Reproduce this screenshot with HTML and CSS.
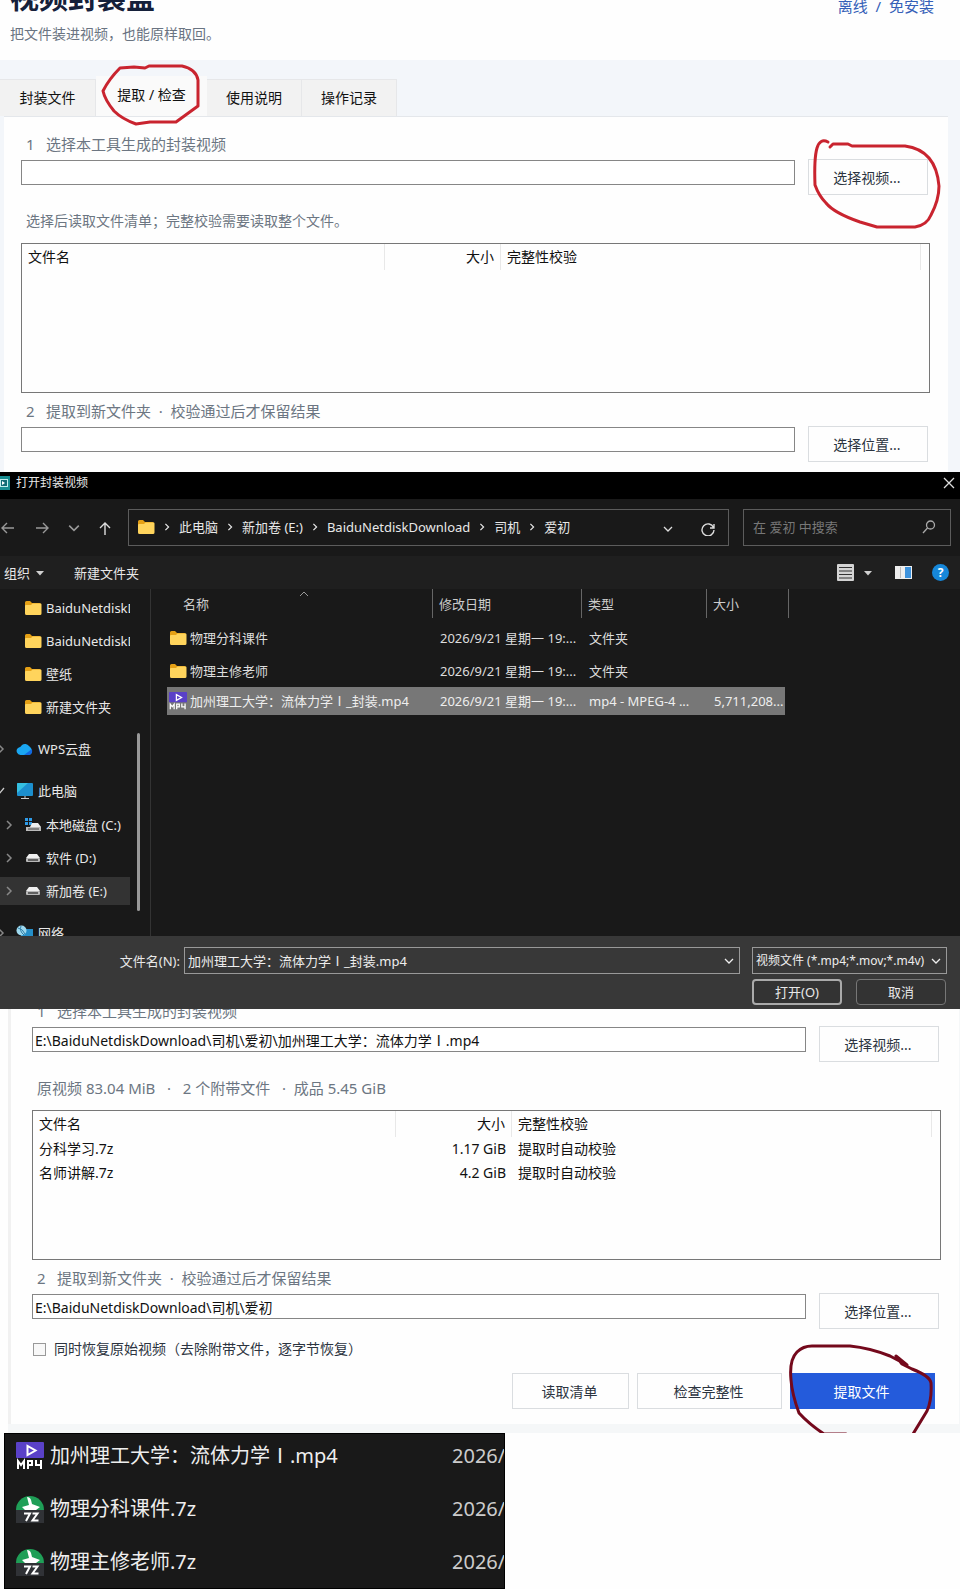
FILE: index.html
```html
<!DOCTYPE html>
<html lang="zh-CN">
<head>
<meta charset="utf-8">
<title>视频封装盒</title>
<link rel="stylesheet" href="styles.css">
</head>
<body>
<svg class="defs" width="0" height="0" aria-hidden="true">
  <symbol id="folder" viewBox="0 0 18 16"><path d="M1 2.500Q1 1 2.500 1H6l2 2h7.500Q17 3 17 4.500V8H1z" fill="#e5a015"/><path d="M1 6Q1 5 2 5H7l1.500-1.500H16.500Q17.500 3.500 17.500 4.500V13.500Q17.500 15 16 15H2.500Q1 15 1 13.500z" fill="#ffd45c"/></symbol>
  <symbol id="chev" viewBox="0 0 10 10"><path d="M3 1l4 4-4 4" fill="none" stroke="currentColor" stroke-width="1.500"/></symbol>
  <symbol id="down" viewBox="0 0 10 10"><path d="M1 3l4 4 4-4" fill="none" stroke="currentColor" stroke-width="1.300"/></symbol>
  <symbol id="tri" viewBox="0 0 10 10"><path d="M1 3h8L5 7.500z" fill="#d0d0d0"/></symbol>
  <symbol id="drive" viewBox="0 0 16 12"><path d="M4 2h8L15 6H1z" fill="#f0f0f0"/><rect x="1" y="6" width="14" height="4" rx="1" fill="#b9b9b9"/><path d="M3 8h10" stroke="#444" stroke-width="1.500"/></symbol>
  <symbol id="mp4" viewBox="0 0 28 28"><rect width="28" height="16" rx="1" fill="#5a41c8"/><path d="M11.500 4v9l8-4.500z" fill="none" stroke="#fff" stroke-width="2"/><path d="M2 27v-8l3 4 3-4v8M12 27v-8h4v4h-4M20 18v5h6M25 18v9" fill="none" stroke="#fff" stroke-width="2"/></symbol>
  <symbol id="sevenz" viewBox="0 0 28 28"><path d="M0 15a14 14 0 0 1 28 0z" fill="#1f9f57"/><path d="M11 2q3 0 4 3l1 4 8 3-4 3H9l-3-3 7-2z" fill="#fff"/><rect y="15" width="28" height="13" fill="#303236"/><path d="M8 18.500h6l-4 7.500M16.500 18.500h5l-5 7h6" fill="none" stroke="#fff" stroke-width="2"/></symbol>
</svg>

<main class="page">
  <section class="tool">
    <header class="tool-head">
      <div>
        <h1 class="tool-title">视频封装盒</h1>
        <p class="tool-sub">把文件装进视频，也能原样取回。</p>
      </div>
      <span class="tool-note">离线 &nbsp;/ &nbsp;免安装</span>
    </header>
    <nav class="tabs" role="tablist">
      <button class="tab tab-first" role="tab">封装文件</button>
      <div class="marked">
        <button class="tab tab-active" role="tab" aria-selected="true">提取 / 检查</button>
        <svg class="mark mark-tab" width="104" height="66" viewBox="0 0 104 66"><path d="M3 29Q9 17 20 6L34 5 45 6 49 4H82Q96 7 98 18V44L76 60H50L36 62Q22 57 14 49 5 38 3 29z"/></svg>
      </div>
      <button class="tab" role="tab">使用说明</button>
      <button class="tab tab-last" role="tab">操作记录</button>
    </nav>
    <div class="panel">
      <label class="step" for="v1"><span class="num">1</span>选择本工具生成的封装视频</label>
      <div class="pick">
        <input class="path" id="v1" type="text">
        <div class="marked">
          <button class="btn">选择视频...</button>
          <svg class="mark mark-pick" width="136" height="96" viewBox="0 0 136 96"><path d="M20 6Q12 2 9 12 6 22 7 49 11 60 18 67 26 77 52 86L69 91H107Q119 89 123 79 131 64 131 50 128 14 97 10H44L40 8H25L22 11"/></svg>
        </div>
      </div>
      <p class="status status-hint">选择后读取文件清单；完整校验需要读取整个文件。</p>
      <div class="list">
        <table class="grid">
          <colgroup><col class="c-name"><col class="c-size"><col><col class="c-end"></colgroup>
          <thead><tr><th>文件名</th><th class="num-cell">大小</th><th>完整性校验</th><th></th></tr></thead>
        </table>
      </div>
      <label class="step" for="o1"><span class="num">2</span>提取到新文件夹 &nbsp;·&nbsp; 校验通过后才保留结果</label>
      <div class="pick">
        <input class="path" id="o1" type="text">
        <button class="btn">选择位置...</button>
      </div>
    </div>
  </section>

  <section class="dialog">
    <header class="bar">
      <svg width="10" height="14" viewBox="0 0 10 14"><path d="M0 0h10v14H0z" fill="#178c90"/><path d="M0 3h8v8H0z" fill="#bfeeee"/><path d="M1 4h6v6H1z" fill="#126b75"/><path d="M2 5l3 2-3 2z" fill="#fff"/></svg>
      <span class="bar-title">打开封装视频</span>
      <button class="icon-btn" aria-label="关闭"><svg width="12" height="12" viewBox="0 0 12 12"><path d="M1 1l10 10M11 1L1 11" stroke="#ddd" stroke-width="1.300"/></svg></button>
    </header>
    <div class="nav">
      <div class="arrows">
        <button class="icon-btn dim" aria-label="后退"><svg width="14" height="14" viewBox="0 0 14 14"><path d="M14 7H2M7 2L2 7l5 5" fill="none" stroke="currentColor" stroke-width="1.400"/></svg></button>
        <button class="icon-btn dim forward" aria-label="前进"><svg width="14" height="14" viewBox="0 0 14 14"><path d="M0 7h12M7 2l5 5-5 5" fill="none" stroke="currentColor" stroke-width="1.400"/></svg></button>
        <button class="icon-btn dim" aria-label="最近位置"><svg width="12" height="12"><use href="#down"/></svg></button>
        <button class="icon-btn" aria-label="上移"><svg width="14" height="14" viewBox="0 0 14 14"><path d="M7 14V2M2 7l5-5 5 5" fill="none" stroke="currentColor" stroke-width="1.400"/></svg></button>
      </div>
      <div class="address">
        <svg width="18" height="16"><use href="#folder"/></svg>
        <svg class="sep" width="8" height="8"><use href="#chev"/></svg><span>此电脑</span>
        <svg class="sep" width="8" height="8"><use href="#chev"/></svg><span>新加卷 (E:)</span>
        <svg class="sep" width="8" height="8"><use href="#chev"/></svg><span>BaiduNetdiskDownload</span>
        <svg class="sep" width="8" height="8"><use href="#chev"/></svg><span>司机</span>
        <svg class="sep" width="8" height="8"><use href="#chev"/></svg><span>爱初</span>
        <span class="address-end">
          <button class="icon-btn" aria-label="历史"><svg width="10" height="10"><use href="#down"/></svg></button>
          <button class="icon-btn" aria-label="刷新"><svg width="14" height="14" viewBox="0 0 14 14"><path d="M12.500 5.500A6 6 0 1 0 13 8M13 2v4H9" fill="none" stroke="currentColor" stroke-width="1.400"/></svg></button>
        </span>
      </div>
      <div class="search">
        <input class="search-input" type="text" aria-label="搜索" placeholder="在 爱初 中搜索">
        <svg width="14" height="14" viewBox="0 0 14 14"><circle cx="8.500" cy="5" r="4" fill="none" stroke="#aaa" stroke-width="1.300"/><path d="M5.500 8L1 13" stroke="#aaa" stroke-width="1.300"/></svg>
      </div>
    </div>
    <div class="toolbar">
      <button class="text-btn">组织 <svg width="10" height="10"><use href="#tri"/></svg></button>
      <button class="text-btn">新建文件夹</button>
      <div class="views">
        <button class="icon-btn" aria-label="视图"><svg width="17" height="17" viewBox="0 0 17 17"><rect width="17" height="17" rx="1" fill="#d4d4d4"/><path d="M2 3.500h13M2 7h13M2 10.500h13M2 14h13" stroke="#333" stroke-width="1.200"/></svg></button>
        <button class="icon-btn view-more" aria-label="更多视图"><svg width="10" height="10"><use href="#tri"/></svg></button>
        <button class="icon-btn view-pane" aria-label="预览窗格"><svg width="17" height="13" viewBox="0 0 17 13"><path d="M0 0h17v13H0z" fill="#eee"/><path d="M10 1h6v11h-6z" fill="#3d92dc"/><path d="M5.500 1v11" stroke="#bbb"/></svg></button>
        <button class="help" aria-label="帮助">?</button>
      </div>
    </div>
    <div class="browse">
      <ul class="tree">
        <li class="node sub"><svg width="18" height="16"><use href="#folder"/></svg><span class="cut">BaiduNetdiskDownload</span></li>
        <li class="node sub"><svg width="18" height="16"><use href="#folder"/></svg><span class="cut">BaiduNetdiskDownload</span></li>
        <li class="node sub"><svg width="18" height="16"><use href="#folder"/></svg><span>壁纸</span></li>
        <li class="node sub"><svg width="18" height="16"><use href="#folder"/></svg><span>新建文件夹</span></li>
        <li class="node top"><svg class="twist" width="10" height="10"><use href="#chev"/></svg><svg width="18" height="14" viewBox="0 0 18 14"><path d="M5 13a4 4 0 0 1-3-7Q5 5 6 3a5 5 0 0 1 7 1q3 2 3 6-1 3-4 3z" fill="#1aa7f2"/><path d="M8 13L16 7q1 6-4 6z" fill="#1267e0"/></svg><span>WPS云盘</span></li>
        <li class="node top"><svg class="twist" width="10" height="10" viewBox="0 0 10 10"><path d="M0 5l3 3 5-6" fill="none" stroke="#ccc" stroke-width="1.300"/></svg><svg width="18" height="16" viewBox="0 0 18 16"><rect x="1" width="16" height="13" rx="1" fill="#1c8fce"/><path d="M1 10L12 0H2Q1 0 1 1z" fill="#35bfe0"/><path d="M9 13v2M5 15.500h8" stroke="#ccc"/></svg><span>此电脑</span></li>
        <li class="node leaf"><svg class="twist" width="10" height="10"><use href="#chev"/></svg><svg width="18" height="14" viewBox="0 0 18 14"><path d="M1 0h3v3H1zM5 0h3v3H5zM1 4h3v3H1zM5 4h3v3H5z" fill="#2e9be8"/><path d="M8 5h6l3 4H6z" fill="#eee"/><path d="M2 9h15v4H2z" fill="#bbb"/><path d="M4 11h11" stroke="#444"/></svg><span>本地磁盘 (C:)</span></li>
        <li class="node leaf"><svg class="twist" width="10" height="10"><use href="#chev"/></svg><svg width="18" height="12"><use href="#drive"/></svg><span>软件 (D:)</span></li>
        <li class="node leaf current"><svg class="twist" width="10" height="10"><use href="#chev"/></svg><svg width="18" height="12"><use href="#drive"/></svg><span>新加卷 (E:)</span></li>
        <li class="node top"><svg class="twist" width="10" height="10"><use href="#chev"/></svg><svg width="18" height="16" viewBox="0 0 18 16"><path d="M5 4h12v10H5z" fill="#258fc9"/><circle cx="5.500" cy="5.500" r="5" fill="#9ed9ef"/><path d="M2 3q5 1 7 6M5 1q-2 5 3 9" fill="none" stroke="#2f7fa8"/></svg><span>网络</span></li>
      </ul>
      <div class="rail"><span class="thumb"></span></div>
      <div class="files">
        <svg class="sort" width="10" height="6" viewBox="0 0 10 6"><path d="M1 5l4-4 4 4" fill="none" stroke="#999"/></svg>
        <table class="file-table">
          <colgroup><col class="f-name"><col class="f-date"><col class="f-type"><col class="f-size"></colgroup>
          <thead><tr><th class="first">名称</th><th>修改日期</th><th>类型</th><th>大小</th></tr></thead>
          <tbody>
            <tr><td><span class="file"><svg width="18" height="16"><use href="#folder"/></svg>物理分科课件</span></td><td>2026/9/21 星期一 19:...</td><td>文件夹</td><td></td></tr>
            <tr><td><span class="file"><svg width="18" height="16"><use href="#folder"/></svg>物理主修老师</span></td><td>2026/9/21 星期一 19:...</td><td>文件夹</td><td></td></tr>
            <tr class="selected"><td><span class="file"><svg width="18" height="18"><use href="#mp4"/></svg>加州理工大学：流体力学Ⅰ_封装.mp4</span></td><td>2026/9/21 星期一 19:...</td><td>mp4 - MPEG-4 ...</td><td class="bytes">5,711,208...</td></tr>
          </tbody>
        </table>
      </div>
    </div>
    <footer class="choose">
      <label class="choose-label" for="fn">文件名(N):</label>
      <div class="combo"><input class="combo-input" id="fn" type="text" value="加州理工大学：流体力学Ⅰ_封装.mp4"><svg width="10" height="10"><use href="#down"/></svg></div>
      <div class="combo kind"><select class="combo-input" aria-label="文件类型"><option>视频文件 (*.mp4;*.mov;*.m4v)</option></select><svg width="10" height="10"><use href="#down"/></svg></div>
      <div class="choose-actions"><button class="dark-btn primary">打开(O)</button><button class="dark-btn">取消</button></div>
    </footer>
  </section>

  <section class="result">
    <div class="panel panel-result">
      <label class="step" for="v2"><span class="num">1</span>选择本工具生成的封装视频</label>
      <div class="pick">
        <input class="path" id="v2" type="text" value="E:\BaiduNetdiskDownload\司机\爱初\加州理工大学：流体力学Ⅰ.mp4">
        <button class="btn">选择视频...</button>
      </div>
      <p class="status">原视频 83.04 MiB &nbsp;&nbsp;·&nbsp;&nbsp; 2 个附带文件 &nbsp;&nbsp;·&nbsp; 成品 5.45 GiB</p>
      <div class="list">
        <table class="grid">
          <colgroup><col class="c-name"><col class="c-size"><col><col class="c-end"></colgroup>
          <thead><tr><th>文件名</th><th class="num-cell">大小</th><th>完整性校验</th><th></th></tr></thead>
          <tbody>
            <tr><td>分科学习.7z</td><td class="num-cell">1.17 GiB</td><td>提取时自动校验</td><td></td></tr>
            <tr><td>名师讲解.7z</td><td class="num-cell">4.2 GiB</td><td>提取时自动校验</td><td></td></tr>
          </tbody>
        </table>
      </div>
      <label class="step" for="o2"><span class="num">2</span>提取到新文件夹 &nbsp;·&nbsp; 校验通过后才保留结果</label>
      <div class="pick">
        <input class="path" id="o2" type="text" value="E:\BaiduNetdiskDownload\司机\爱初">
        <button class="btn">选择位置...</button>
      </div>
      <label class="check"><input class="check-box" type="checkbox">同时恢复原始视频（去除附带文件，逐字节恢复）</label>
      <div class="actions">
        <button class="btn btn-list">读取清单</button>
        <button class="btn btn-wide">检查完整性</button>
        <div class="marked">
          <button class="btn btn-wide btn-blue">提取文件</button>
          <svg class="mark mark-dark" width="148" height="96" viewBox="0 0 148 96"><path d="M58 94H36Q21 84 11 73 4 54 3 40 1 20 9 12 15 6 24 6H62Q82 8 102 16L119 25 108 16 114 24 124 29Q142 36 143 43 144 60 139 71L125 94"/></svg>
        </div>
      </div>
    </div>
  </section>

  <section class="outputs">
    <div class="out"><svg width="28" height="28"><use href="#mp4"/></svg><span class="out-name">加州理工大学：流体力学Ⅰ.mp4</span><span class="out-date">2026/9/21</span></div>
    <div class="out"><svg width="28" height="28"><use href="#sevenz"/></svg><span class="out-name">物理分科课件.7z</span><span class="out-date">2026/9/21</span></div>
    <div class="out"><svg width="28" height="28"><use href="#sevenz"/></svg><span class="out-name">物理主修老师.7z</span><span class="out-date">2026/9/21</span></div>
  </section>
</main>
</body>
</html>
```
FILE: styles.css
```css
* { box-sizing: border-box; }
body { margin: 0; background: #fefefe; font-family: "Noto Sans", "Noto Sans CJK SC", sans-serif; font-size: 14px; color: #111; }
button, input, select { font: inherit; color: inherit; margin: 0; }
h1, p, ul { margin: 0; padding: 0; }
svg { flex: none; display: block; }
.defs { position: absolute; }
.page { display: flex; flex-direction: column; }

/* tool window */
.tool { background: #f3f6fa; overflow: hidden; }
.tool-head { display: flex; justify-content: space-between; height: 60px; padding: 0 26px 0 10px; background: #fefefe; }
.tool-title { margin-top: -22px; font-family: "Noto Sans CJK SC", sans-serif; font-size: 29px; line-height: 36px; font-weight: 700; color: #15203a; }
.tool-sub { margin-top: 10px; font-size: 14px; line-height: 20px; color: #6a7482; }
.tool-note { margin-top: -4px; font-size: 15px; line-height: 20px; color: #3560b8; }
.tabs { display: flex; align-items: flex-end; padding-top: 16px; }
.tab { height: 37px; padding: 0 19px; border: 1px solid #e6e7e9; border-bottom: 0; border-left: 0; background: #f2f2f2; line-height: 20px; white-space: nowrap; }
.tab-first { width: 96px; }
.tab-active { width: 111px; height: 40px; padding-bottom: 3px; background: #fafafa; border: 0; }
.panel { display: flex; flex-direction: column; margin: 0 12px 0 4px; padding: 17px 20px 10px 17px; background: #fefefe; border-top: 1px solid #e4e7eb; }
.step { margin-left: 5px; font-size: 15px; line-height: 20px; color: #6c7682; }
.num { display: inline-block; width: 20px; }
.pick { display: flex; gap: 13px; margin-top: 5px; height: 36px; }
.path { flex: 1; min-width: 0; height: 25px; margin-top: 1px; padding: 0 2px; border: 1px solid #868686; background: #fff; }
.btn { width: 120px; height: 36px; padding: 0 2px 1px 0; border: 1px solid #dadde0; background: #fefefe; color: #2c3440; font-size: 14px; }
.status { margin: 16px 0 12px 5px; font-size: 15px; line-height: 20px; color: #6c7682; }
.status-hint { font-size: 14px; }
.list { height: 150px; margin: 0 -2px 8px 0; border: 1px solid #777; background: #fefefe; }
.grid { width: 100%; table-layout: fixed; border-collapse: separate; border-spacing: 0; }
.c-name { width: 363px; }
.c-size { width: 116px; }
.c-end { width: 8px; }
.grid th, .grid td { height: 24px; padding: 0 6px; text-align: left; font-weight: 400; line-height: 20px; }
.grid th { height: 26px; border-right: 1px solid #e8e8e8; }
.grid th:last-child { border-right: 0; padding: 0; }
.grid .num-cell { text-align: right; }
.marked { position: relative; }
.mark { position: absolute; pointer-events: none; fill: none; stroke: #c9242f; stroke-width: 3; stroke-linejoin: round; stroke-linecap: round; }
.mark-tab { left: 4px; top: -14px; }
.mark-pick { left: 0; top: -23px; }
.mark-dark { left: -2px; top: -33px; stroke: #74091c; }

/* file dialog */
.dialog { background: #191919; color: #e8e8e8; font-size: 13px; line-height: 20px; }
.bar { display: flex; align-items: center; gap: 6px; height: 27px; padding: 0 5px 6px 0; background: #000; font-size: 12px; }
.bar-title { flex: 1; }
.icon-btn { display: flex; align-items: center; justify-content: center; padding: 0; border: 0; background: none; color: #ddd; }
.dim { color: #999; }
.nav { display: flex; align-items: center; gap: 14px; height: 57px; padding-right: 9px; }
.arrows { display: flex; justify-content: space-between; width: 114px; padding-right: 2px; }
.forward { margin-left: 4px; }
.address, .search { display: flex; align-items: center; height: 37px; padding-bottom: 2px; border: 1px solid #5c5c5c; }
.address { flex: 1; padding-left: 8px; padding-right: 13px; white-space: nowrap; }
.sep { margin: 0 8px; }
.address-end { display: flex; gap: 28px; margin-left: auto; padding-top: 4px; }
.search { width: 208px; padding-left: 9px; padding-right: 14px; }
.search-input { flex: 1; min-width: 0; padding: 0; border: 0; background: none; }
.search-input::placeholder { color: #777; opacity: 1; }
.toolbar { display: flex; align-items: center; gap: 29px; height: 33px; padding: 0 11px 0 4px; background: #1f1f1f; }
.text-btn { display: flex; align-items: center; gap: 5px; padding: 0; border: 0; background: none; }
.views { display: flex; align-items: center; margin-left: auto; }
.view-more { margin-left: 9px; }
.view-pane { margin: 0 20px 0 22px; }
.help { width: 17px; height: 17px; padding: 0; border: 0; border-radius: 50%; background: #1687d9; color: #fff; font-size: 12px; line-height: 17px; font-weight: 700; }
.browse { display: flex; height: 347px; overflow: hidden; }
.tree { width: 130px; padding-top: 2px; list-style: none; }
.node { display: flex; align-items: center; gap: 4px; height: 33px; white-space: nowrap; }
.sub { padding-left: 24px; }
.cut { flex: 1; overflow: hidden; }
.top { margin: 9px 0; }
.top + .top { margin: 9px 0 1px; }
.top .twist { margin-left: -4px; margin-right: 6px; }
.leaf { padding-left: 4px; }
.leaf .twist { margin-right: 6px; }
.twist { color: #888; }
.current { background: linear-gradient(#333, #333) center / 100% 28px no-repeat; }
.rail { width: 21px; padding: 144px 0 0 7px; border-right: 1px solid #333; }
.thumb { display: block; width: 3px; height: 178px; border-radius: 2px; background: #999; }
.files { position: relative; flex: 1; padding: 0 0 0 16px; }
.sort { position: absolute; left: 148px; top: 2px; }
.file-table { width: 622px; table-layout: fixed; border-spacing: 0; }
.f-name { width: 266px; }
.f-date { width: 149px; }
.f-type { width: 125px; }
.f-size { width: 82px; }
.file-table th { height: 29px; padding: 0 6px; border-right: 1px solid #666; color: #ccc; text-align: left; font-weight: 400; }
.file-table th.first { padding-left: 16px; }
.file-table td { height: 33px; padding: 0 0 0 7px; white-space: nowrap; color: #ddd; background-clip: padding-box; }
.file-table td:first-child { padding-left: 2px; }
.file-table thead::after { content: ""; display: block; height: 3px; }
.file { display: flex; align-items: center; gap: 3px; }
.file-table .selected td { height: 28px; background-color: #777; color: #eee; }
.file-table .bytes { padding-right: 4px; text-align: right; border-right: 4px solid transparent; }
.choose { display: grid; grid-template-columns: 176px 1fr 195px; gap: 5px 12px; padding: 11px 13px 4px 0; background: #383838; }
.choose-label { align-self: center; text-align: right; margin-right: -8px; padding-right: 4px; }
.combo { display: flex; align-items: center; height: 27px; margin-left: -4px; padding: 0 5px 0 3px; border: 1px solid #999; color: #eee; }
.kind { margin-left: 0; }
.combo-input { flex: 1; min-width: 0; padding: 0; border: 0; background: none; appearance: none; font-size: 13px; }
.kind .combo-input { font-size: 12px; white-space: nowrap; }
.choose-actions { grid-column: 3; display: flex; gap: 14px; }
.dark-btn { width: 90px; height: 26px; padding: 0; border: 1px solid #777; border-radius: 4px; background: #333; line-height: 20px; }
.primary { border: 2px solid #aaa; }

/* extraction result */
.result { overflow: hidden; margin-left: 8px; padding-bottom: 9px; background: #f5f7f8; }
.panel-result { margin: -8px 1px 0 0; padding: 0 20px 15px 21px; border-top: 0; border-left: 3px solid #f1f1f1; }
.check { display: flex; align-items: center; gap: 8px; margin: 10px 0 14px 1px; line-height: 20px; color: #2c3440; }
.check-box { width: 13px; height: 13px; appearance: none; border: 1px solid #999; background: #f8f8f8; }
.actions { display: flex; justify-content: flex-end; gap: 8px; margin-right: 4px; }
.btn-list { width: 117px; }
.btn-wide { width: 145px; }
.btn-blue { border-color: #245bdb; background: #245bdb; color: #fff; }

/* extracted files */
.outputs { width: 501px; margin-left: 4px; overflow: hidden; background: #191919; border: 1px solid #000; color: #eee; font-size: 20px; line-height: 28px; }
.out { display: flex; align-items: center; gap: 6px; height: 53px; padding-left: 11px; white-space: nowrap; }
.out:first-child { margin-top: -5px; }
.out-name { flex: none; width: 396px; }
.out-date { flex: none; color: #ccc; }
```
